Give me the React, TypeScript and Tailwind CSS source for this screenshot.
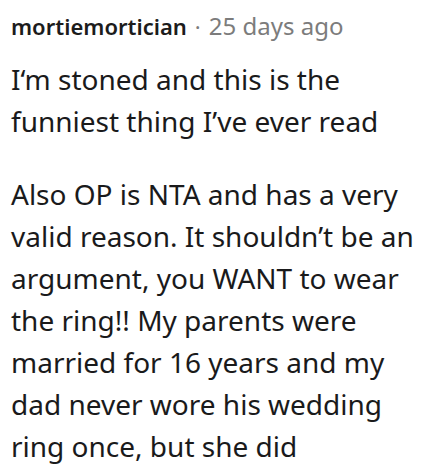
export default function App() {
  return (
    <div className="w-[430px] h-[476px] bg-white overflow-hidden pl-[11px] pt-[9px]" style={{ fontFamily: '"Noto Sans", sans-serif' }}>
      <div className="flex items-center leading-[34px] whitespace-nowrap">
        <span className="font-semibold text-[22px] text-[#1c1c1c]">mortiemortician</span>
        <span className="text-[#7c7c7c] text-[22px] ml-[8px]">·</span>
        <span className="text-[#7c7c7c] text-[24px] ml-[8px]">25 days ago</span>
      </div>
      <div className="mt-[14.5px] text-[28px] leading-[42px] text-[#1a1a1b]">
        <p>I‘m stoned and this is the<br />funniest thing I’ve ever read</p>
        <p className="mt-[31px]">Also OP is NTA and has a very<br />valid reason. It shouldn’t be an<br />argument, you WANT to wear<br />the ring!! My parents were<br />married for 16 years and my<br />dad never wore his wedding<br />ring once, but she did</p>
      </div>
    </div>
  );
}
